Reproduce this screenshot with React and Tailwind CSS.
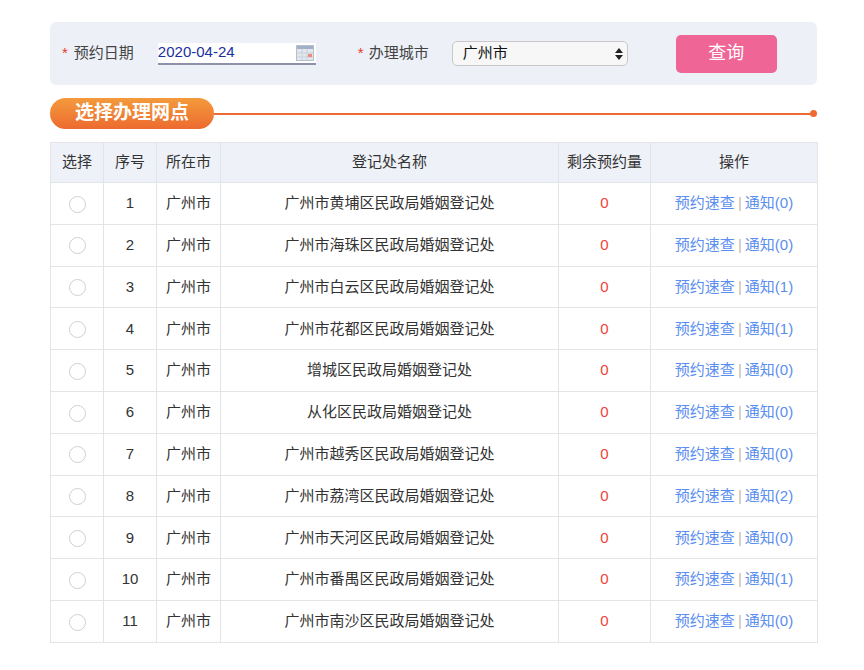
import React from 'react'

const rows = [
  { no: 1, name: '广州市黄埔区民政局婚姻登记处', notice: 0 },
  { no: 2, name: '广州市海珠区民政局婚姻登记处', notice: 0 },
  { no: 3, name: '广州市白云区民政局婚姻登记处', notice: 1 },
  { no: 4, name: '广州市花都区民政局婚姻登记处', notice: 1 },
  { no: 5, name: '增城区民政局婚姻登记处', notice: 0 },
  { no: 6, name: '从化区民政局婚姻登记处', notice: 0 },
  { no: 7, name: '广州市越秀区民政局婚姻登记处', notice: 0 },
  { no: 8, name: '广州市荔湾区民政局婚姻登记处', notice: 2 },
  { no: 9, name: '广州市天河区民政局婚姻登记处', notice: 0 },
  { no: 10, name: '广州市番禺区民政局婚姻登记处', notice: 1 },
  { no: 11, name: '广州市南沙区民政局婚姻登记处', notice: 0 },
]

const CalendarIcon = () => (
  <svg width="18" height="16" viewBox="0 0 18 16">
    <rect x="0.5" y="0.5" width="17" height="15" fill="#e4e8ee" stroke="#b8c0cc" />
    <rect x="1" y="1" width="16" height="3" fill="#9fb0c8" />
    <g stroke="#c8d0da" strokeWidth="1">
      <line x1="1" y1="8" x2="17" y2="8" />
      <line x1="1" y1="12" x2="17" y2="12" />
      <line x1="6" y1="4" x2="6" y2="15" />
      <line x1="11" y1="4" x2="11" y2="15" />
    </g>
    <rect x="12" y="9" width="4" height="3" fill="#f08a7a" />
  </svg>
)

const App = () => {
  return (
    <div
      className="min-h-screen bg-white pl-[50px] pt-[22px] text-[15px] text-[#333]"
      style={{ fontFamily: '"Liberation Sans", "Noto Sans CJK SC", sans-serif' }}
    >
      <div className="w-[767px]">
        {/* Filter bar */}
        <div className="h-[63px] rounded-md bg-[#edf0f7] flex items-center pl-[12px]">
          <span className="text-[#e8382b] mr-[6px]">*</span>
          <span className="text-[#444]">预约日期</span>
          <div className="ml-[24px] w-[158px] h-[22px] bg-white border-b-2 border-[#8e92a8] flex items-center justify-between pr-[2px]">
            <span className="text-[#1b2fa0]">2020-04-24</span>
            <CalendarIcon />
          </div>
          <span className="text-[#e8382b] ml-[42px] mr-[5px]">*</span>
          <span className="text-[#444]">办理城市</span>
          <div className="ml-[23px] w-[176px] h-[25px] rounded-[5px] border border-[#c8c8c8] bg-[#f7f7f7] flex items-center justify-between pl-[10px] pr-[4px]">
            <span className="text-[#111]">广州市</span>
            <svg width="8" height="12" viewBox="0 0 8 12">
              <path d="M4 0 L8 5 L0 5 Z" fill="#222" />
              <path d="M0 7 L8 7 L4 12 Z" fill="#222" />
            </svg>
          </div>
          <button className="ml-[48px] w-[101px] h-[38px] rounded-[5px] bg-[#ef6595] text-white text-[18px]">
            查询
          </button>
        </div>

        {/* Section title */}
        <div className="mt-[13px] flex items-center">
          <div className="w-[164px] h-[31px] rounded-full bg-gradient-to-b from-[#f49a3c] to-[#ec6a2f] text-white font-bold text-[19px] flex items-center justify-center">
            选择办理网点
          </div>
          <div className="flex-1 h-[2px] bg-[#ee6a33]" />
          <div className="w-[7px] h-[7px] rounded-full bg-[#ee6a33] -ml-[2px]" />
        </div>

        {/* Table */}
        <table className="mt-[13px] w-[767px] border-collapse table-fixed text-center">
          <colgroup>
            <col className="w-[53px]" />
            <col className="w-[53px]" />
            <col className="w-[64px]" />
            <col className="w-[338px]" />
            <col className="w-[92px]" />
            <col className="w-[167px]" />
          </colgroup>
          <thead>
            <tr className="h-[40px] bg-[#eef1f7] text-[#333]">
              <th className="font-normal border border-[#e2e4e8]">选择</th>
              <th className="font-normal border border-[#e2e4e8]">序号</th>
              <th className="font-normal border border-[#e2e4e8]">所在市</th>
              <th className="font-normal border border-[#e2e4e8]">登记处名称</th>
              <th className="font-normal border border-[#e2e4e8]">剩余预约量</th>
              <th className="font-normal border border-[#e2e4e8]">操作</th>
            </tr>
          </thead>
          <tbody>
            {rows.map((r) => (
              <tr key={r.no} className="h-[41.8px]">
                <td className="border border-[#e2e4e8]">
                  <span className="inline-block align-middle w-[17px] h-[17px] rounded-full border border-[#d0d0d0] bg-white" />
                </td>
                <td className="border border-[#e2e4e8]">{r.no}</td>
                <td className="border border-[#e2e4e8]">广州市</td>
                <td className="border border-[#e2e4e8]">{r.name}</td>
                <td className="border border-[#e2e4e8] text-[#f0413a]">0</td>
                <td className="border border-[#e2e4e8] text-[#5a8ef0]">
                  预约速查<span className="mx-[3px] text-[#c8b9a8]">|</span>通知({r.notice})
                </td>
              </tr>
            ))}
          </tbody>
        </table>
      </div>
    </div>
  )
}

export default App
